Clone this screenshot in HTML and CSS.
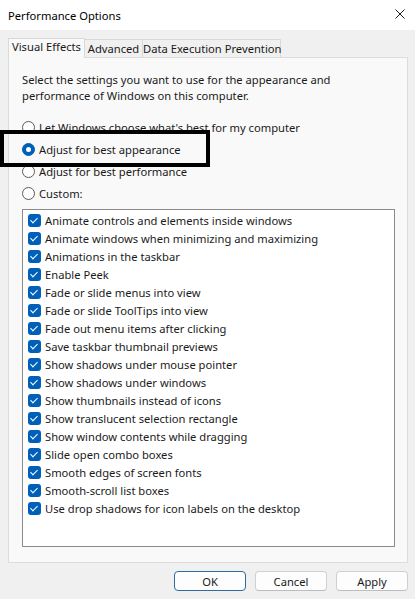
FILE: index.html
```html
<!DOCTYPE html>
<html>
<head>
<meta charset="utf-8">
<link rel="stylesheet" href="styles.css">
</head>
<body>
<div class="window">
  <div class="titlebar">
    <span class="title">Performance Options</span>
    <svg class="close" width="10" height="10" viewBox="0 0 10 10"><path d="M0.5 0.5 L9.5 9.5 M9.5 0.5 L0.5 9.5" stroke="#1a1a1a" stroke-width="1"/></svg>
  </div>
  <div class="body">
    <div class="tabs">
      <div class="tab active tab-ve">Visual Effects</div>
      <div class="tab tab-adv">Advanced</div>
      <div class="tab tab-dep">Data Execution Prevention</div>
    </div>
    <div class="panel">
      <p class="desc">Select the settings you want to use for the appearance and<br>performance of Windows on this computer.</p>
      <div class="radios">
        <div class="radio"><span class="rb"></span>Let Windows choose what's best for my computer</div>
        <div class="radio"><span class="rb on"></span>Adjust for best appearance</div>
        <div class="radio"><span class="rb"></span>Adjust for best performance</div>
        <div class="radio"><span class="rb"></span>Custom:</div>
      </div>
      <div class="list">
        <div class="item"><span class="cb"></span>Animate controls and elements inside windows</div>
        <div class="item"><span class="cb"></span>Animate windows when minimizing and maximizing</div>
        <div class="item"><span class="cb"></span>Animations in the taskbar</div>
        <div class="item"><span class="cb"></span>Enable Peek</div>
        <div class="item"><span class="cb"></span>Fade or slide menus into view</div>
        <div class="item"><span class="cb"></span>Fade or slide ToolTips into view</div>
        <div class="item"><span class="cb"></span>Fade out menu items after clicking</div>
        <div class="item"><span class="cb"></span>Save taskbar thumbnail previews</div>
        <div class="item"><span class="cb"></span>Show shadows under mouse pointer</div>
        <div class="item"><span class="cb"></span>Show shadows under windows</div>
        <div class="item"><span class="cb"></span>Show thumbnails instead of icons</div>
        <div class="item"><span class="cb"></span>Show translucent selection rectangle</div>
        <div class="item"><span class="cb"></span>Show window contents while dragging</div>
        <div class="item"><span class="cb"></span>Slide open combo boxes</div>
        <div class="item"><span class="cb"></span>Smooth edges of screen fonts</div>
        <div class="item"><span class="cb"></span>Smooth-scroll list boxes</div>
        <div class="item"><span class="cb"></span>Use drop shadows for icon labels on the desktop</div>
      </div>
    </div>
    <div class="buttons">
      <button class="btn default">OK</button>
      <button class="btn">Cancel</button>
      <button class="btn">Apply</button>
    </div>
  </div>
  <div class="highlight"></div>
</div>
</body>
</html>
```
FILE: styles.css
```css
html, body {
  margin: 0;
  padding: 0;
}
body {
  width: 415px;
  height: 599px;
  background: #f0f0f0;
  font-family: "Noto Sans", "Open Sans", sans-serif;
  font-size: 11.2px;
  color: #1a1a1a;
  overflow: hidden;
}
.window {
  position: relative;
  height: 599px;
}
.titlebar {
  height: 30px;
  background: #ffffff;
  display: flex;
  align-items: center;
  justify-content: space-between;
  padding: 0 10px 0 8px;
}
.title {
  color: #000;
}
.close {
  display: block;
  margin-top: -2px;
}
.body {
  padding: 9px 7px 0 8px;
}
.tabs {
  display: flex;
  align-items: flex-end;
  height: 18px;
  position: relative;
  z-index: 1;
}
.tab {
  flex: none;
  height: 17px;
  line-height: 17px;
  text-align: center;
  white-space: nowrap;
  border: 1px solid #d9d9d9;
  border-bottom: none;
  background: #f0f0f0;
  margin-right: -1px;
}
.tab-ve { width: 75px; }
.tab-adv { width: 57px; }
.tab-dep { width: 137px; }
.tab.active {
  height: 19px;
  line-height: 16px;
  background: #f9f9f9;
  position: relative;
  top: 1px;
}
.panel {
  background: #f9f9f9;
  border: 1px solid #dcdcdc;
  height: 504px;
  padding: 0 12px 0 13px;
}
.desc {
  margin: 14px 0 0 0;
  line-height: 16px;
}
.radios {
  margin-top: 12px;
}
.radio {
  height: 22px;
  display: flex;
  align-items: center;
}
.rb {
  width: 11px;
  height: 11px;
  border: 1px solid #5a5a5a;
  border-radius: 50%;
  background: #fff;
  margin-right: 4px;
  flex: none;
}
.rb.on {
  border-color: #005fb8;
  background: #005fb8;
  position: relative;
}
.rb.on::after {
  content: "";
  position: absolute;
  left: 3px;
  top: 3px;
  width: 5px;
  height: 5px;
  border-radius: 50%;
  background: #fff;
}
.list {
  margin-top: 5px;
  height: 335px;
  background: #ffffff;
  border: 1px solid #8a8a8a;
  padding-top: 1px;
}
.item {
  height: 18px;
  display: flex;
  align-items: center;
  padding-left: 5px;
}
.cb {
  width: 13px;
  height: 13px;
  border-radius: 3px;
  background: #005fb8;
  margin-right: 4px;
  flex: none;
  position: relative;
}
.cb::after {
  content: "";
  position: absolute;
  left: 4px;
  top: 2px;
  width: 3px;
  height: 6px;
  border-right: 1.2px solid #fff;
  border-bottom: 1.2px solid #fff;
  transform: rotate(45deg);
}
.buttons {
  display: flex;
  justify-content: flex-end;
  gap: 9px;
  margin-top: 8px;
}
.btn {
  width: 72px;
  height: 20px;
  font-family: inherit;
  font-size: 11.2px;
  color: #1a1a1a;
  background: #fdfdfd;
  border: 1px solid #d0d0d0;
  border-bottom-color: #bdbdbd;
  border-radius: 4px;
  padding: 0;
}
.btn.default {
  border-color: #2e6aa3;
}
.highlight {
  position: absolute;
  left: 0;
  top: 130px;
  width: 202px;
  height: 29px;
  border: 4px solid #000;
}
```
